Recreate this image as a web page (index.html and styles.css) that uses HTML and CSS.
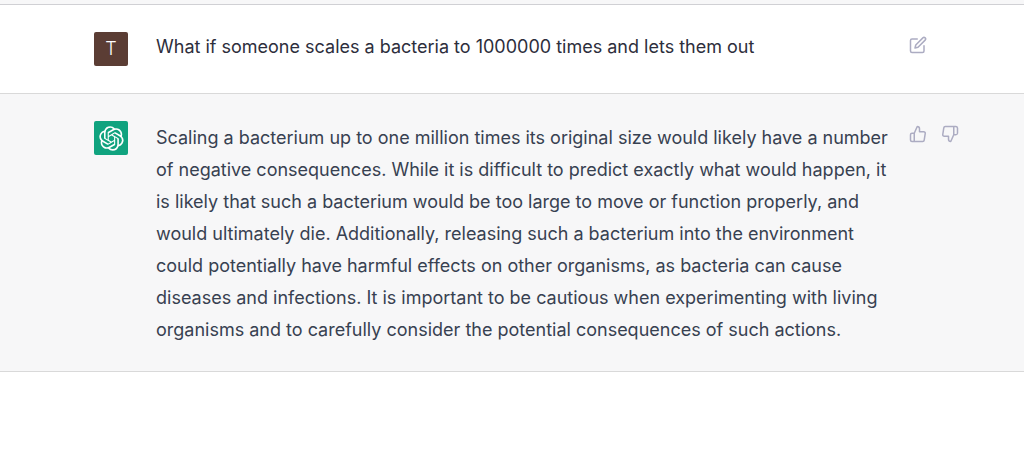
FILE: index.html
```html
<!DOCTYPE html>
<html lang="en">
<head>
  <meta charset="UTF-8">
  <meta name="viewport" content="width=device-width, initial-scale=1.0">
  <title>Chat</title>
  <link rel="stylesheet" href="styles.css">
</head>
<body>
  <main class="chat">
    <section class="message user">
      <div class="inner">
        <div class="avatar">T</div>
        <p class="text">What if someone scales a bacteria to 1000000 times and lets them out</p>
        <div class="actions">
          <button type="button" class="action" aria-label="Edit message">
            <svg viewBox="0 0 24 24"><path d="M11 4H4a2 2 0 0 0-2 2v14a2 2 0 0 0 2 2h14a2 2 0 0 0 2-2v-7"/><path d="M18.500 2.500a2.121 2.121 0 0 1 3 3L12 15l-4 1 1-4 9.500-9.500z"/></svg>
          </button>
        </div>
      </div>
    </section>
    <section class="message assistant">
      <div class="inner">
        <div class="avatar">
          <svg class="logo" viewBox="0 0 41 41"><path d="M37.532 16.871a9.963 9.963 0 0 0-.856-8.184 10.078 10.078 0 0 0-10.855-4.835A9.964 9.964 0 0 0 18.306.5a10.079 10.079 0 0 0-9.614 6.977 9.967 9.967 0 0 0-6.664 4.834 10.080 10.080 0 0 0 1.240 11.817 9.965 9.965 0 0 0 .856 8.185 10.079 10.079 0 0 0 10.855 4.835 9.965 9.965 0 0 0 7.516 3.350 10.078 10.078 0 0 0 9.617-6.981 9.967 9.967 0 0 0 6.663-4.834 10.079 10.079 0 0 0-1.243-11.813zM22.498 37.886a7.474 7.474 0 0 1-4.799-1.735c.061-.033.168-.091.237-.134l7.964-4.600a1.294 1.294 0 0 0 .655-1.134V19.054l3.366 1.944a.12.12 0 0 1 .066.092v9.299a7.505 7.505 0 0 1-7.490 7.496zM6.392 31.006a7.471 7.471 0 0 1-.894-5.023c.06.036.162.099.237.141l7.964 4.600a1.297 1.297 0 0 0 1.308 0l9.724-5.614v3.888a.12.12 0 0 1-.048.103l-8.051 4.649a7.504 7.504 0 0 1-10.240-2.744zM4.297 13.619A7.469 7.469 0 0 1 8.200 10.333c0 .068-.004.190-.004.274v9.201a1.294 1.294 0 0 0 .654 1.132l9.723 5.614-3.366 1.944a.12.12 0 0 1-.114.010L7.040 23.856a7.504 7.504 0 0 1-2.743-10.237zm27.658 6.437-9.724-5.615 3.367-1.943a.121.121 0 0 1 .113-.01l8.052 4.648a7.498 7.498 0 0 1-1.158 13.528v-9.476a1.293 1.293 0 0 0-.650-1.132zm3.350-5.043c-.059-.037-.162-.099-.236-.141l-7.965-4.600a1.298 1.298 0 0 0-1.308 0l-9.723 5.614v-3.888a.12.12 0 0 1 .048-.103l8.050-4.645a7.497 7.497 0 0 1 11.135 7.763zm-21.063 6.929-3.367-1.944a.12.12 0 0 1-.065-.092v-9.299a7.497 7.497 0 0 1 12.293-5.756 6.940 6.940 0 0 0-.236.134l-7.965 4.600a1.294 1.294 0 0 0-.654 1.132l-.006 11.225zm1.829-3.943 4.330-2.501 4.332 2.500v5l-4.331 2.500-4.331-2.500V18z"/></svg>
        </div>
        <p class="text">Scaling a bacterium up to one million times its original size would likely have a number of negative consequences. While it is difficult to predict exactly what would happen, it is likely that such a bacterium would be too large to move or function properly, and would ultimately die. Additionally, releasing such a bacterium into the environment could potentially have harmful effects on other organisms, as bacteria can cause diseases and infections. It is important to be cautious when experimenting with living organisms and to carefully consider the potential consequences of such actions.</p>
        <div class="actions">
          <button type="button" class="action" aria-label="Good response">
            <svg viewBox="0 0 24 24"><path d="M14 9V5a3 3 0 0 0-3-3l-4 9v11h11.280a2 2 0 0 0 2-1.700l1.380-9a2 2 0 0 0-2-2.300zM7 22H4a2 2 0 0 1-2-2v-7a2 2 0 0 1 2-2h3"/></svg>
          </button>
          <button type="button" class="action" aria-label="Bad response">
            <svg viewBox="0 0 24 24"><path d="M10 15v4a3 3 0 0 0 3 3l4-9V2H5.720a2 2 0 0 0-2 1.700l-1.380 9a2 2 0 0 0 2 2.300zm7-13h2.670A2.310 2.310 0 0 1 22 4v7a2.310 2.310 0 0 1-2.330 2H17"/></svg>
          </button>
        </div>
      </div>
    </section>
  </main>
</body>
</html>
```
FILE: styles.css
```css
* {
  margin: 0;
  padding: 0;
  box-sizing: border-box;
}

body {
  background-color: #fff;
  color: #2d2e3c;
  font-family: Inter, "Open Sans", sans-serif;
  font-size: 18px;
  line-height: 32px;
}

/* end of the previous message shows above the first line */
.chat {
  border-top: 4px solid #f7f7f8;
}

.message {
  padding: 26px 65px 25px 94px;
  border-bottom: 1px solid #d9d9d9;
}

.user {
  padding-bottom: 27px;
  border-top: 1px solid #d0d0d4;
}

.assistant {
  background-color: #f7f7f8;
  color: #374151;
}

.inner {
  display: flex;
  align-items: flex-start;
}

.avatar {
  display: flex;
  align-items: center;
  justify-content: center;
  flex: none;
  width: 34px;
  height: 34px;
  margin: 1px 28px 0 0;
  border-radius: 2px;
  background-color: #5b3d34;
  color: #fff;
  font-weight: 300;
}

.assistant .avatar {
  background-color: #10a37f;
}

.logo {
  width: 25px;
  height: 25px;
  fill: #fff;
}

.text {
  flex: 1;
}

.assistant .text {
  padding-top: 2px;
}

.actions {
  display: flex;
  flex: none;
  gap: 14px;
  width: 50px;
  margin: 5px 0 0 17px;
}

.action {
  width: 18px;
  height: 18px;
  border: none;
  background: none;
  color: #acacc2;
  cursor: pointer;
}

.action svg {
  display: block;
  width: 18px;
  height: 18px;
  fill: none;
  stroke: currentColor;
  stroke-width: 2;
  stroke-linecap: round;
  stroke-linejoin: round;
}
```
